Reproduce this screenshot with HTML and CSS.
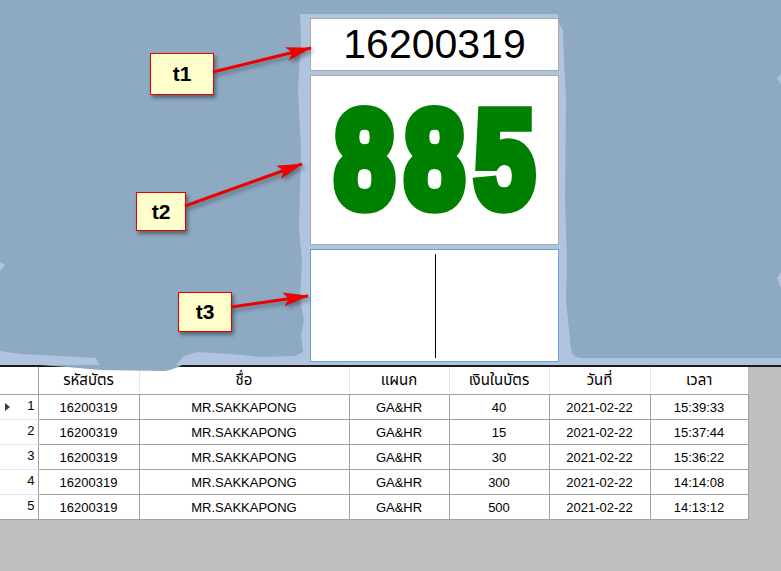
FILE: index.html
```html
<!DOCTYPE html>
<html lang="th">
<head>
<meta charset="utf-8">
<title>Card reader</title>
<link rel="stylesheet" href="styles.css">
</head>
<body>
<div class="top">
  <svg class="backdrop" width="781" height="365" viewBox="0 0 781 365">
    <rect x="0" y="0" width="781" height="365" fill="#8eaac3"/>
    <path fill="#b0c4de" d="M300,14 L558,14 L559,24 L563,30 L564,60 L566,100 L565,200 L567,260 L566,300 L569,330 L571,350 Q573,358 582,358 L781,358 L781,366 L0,366 L0,351 L20,354 L60,356 L96,358 L100,366 L175,366 L184,356 L198,352 L230,354 L262,357 L295,356 L303,352 L301,335 L304,320 L300,300 L302,260 L299,230 L301,150 L298,90 L301,40 Z"/>
    <path fill="#b0c4de" d="M0,262 L5,265 L0,271 Z M781,74 L777,78 L781,84 Z M781,272 L777,278 L781,288 Z"/>
  </svg>
  <div class="panel">
    <div class="box box-t1">16200319</div>
    <div class="box box-t2"><span class="big">885</span></div>
    <div class="box box-t3"><span class="caret"></span></div>
  </div>
  <div class="label label-t1">t1</div>
  <div class="label label-t2">t2</div>
  <div class="label label-t3">t3</div>
  <svg class="arrows" width="781" height="365" viewBox="0 0 781 365">
    <defs>
      <marker id="head" markerUnits="userSpaceOnUse" markerWidth="26" markerHeight="14" viewBox="0 0 26 14" refX="25" refY="7" orient="auto">
        <path d="M0,0 L26,7 L0,14 L6,7 Z" fill="#ee0000"/>
      </marker>
    </defs>
    <line x1="213" y1="72" x2="311" y2="48" stroke="#ee0000" stroke-width="3" marker-end="url(#head)"/>
    <line x1="185" y1="206" x2="302" y2="164" stroke="#ee0000" stroke-width="3" marker-end="url(#head)"/>
    <line x1="231" y1="307" x2="308" y2="296" stroke="#ee0000" stroke-width="3" marker-end="url(#head)"/>
  </svg>
</div>
<div class="rule"></div>
<div class="gridwrap">
  <svg class="bulge" width="200" height="12" viewBox="0 0 200 12">
    <path fill="#8eaac3" d="M40,0 Q70,2 100,5 L165,6 Q175,4 182,0 Z"/>
  </svg>
  <table class="grid">
    <colgroup>
      <col class="c-rh"><col class="c-1"><col class="c-2"><col class="c-3"><col class="c-4"><col class="c-5"><col class="c-6">
    </colgroup>
    <thead>
      <tr>
        <th class="corner"></th>
        <th>รหัสบัตร</th>
        <th>ชื่อ</th>
        <th>แผนก</th>
        <th>เงินในบัตร</th>
        <th>วันที่</th>
        <th>เวลา</th>
      </tr>
    </thead>
    <tbody>
      <tr>
        <td class="rh"><span class="cur"></span><span class="num">1</span></td>
        <td>16200319</td><td>MR.SAKKAPONG</td><td>GA&amp;HR</td><td>40</td><td>2021-02-22</td><td>15:39:33</td>
      </tr>
      <tr>
        <td class="rh"><span></span><span class="num">2</span></td>
        <td>16200319</td><td>MR.SAKKAPONG</td><td>GA&amp;HR</td><td>15</td><td>2021-02-22</td><td>15:37:44</td>
      </tr>
      <tr>
        <td class="rh"><span></span><span class="num">3</span></td>
        <td>16200319</td><td>MR.SAKKAPONG</td><td>GA&amp;HR</td><td>30</td><td>2021-02-22</td><td>15:36:22</td>
      </tr>
      <tr>
        <td class="rh"><span></span><span class="num">4</span></td>
        <td>16200319</td><td>MR.SAKKAPONG</td><td>GA&amp;HR</td><td>300</td><td>2021-02-22</td><td>14:14:08</td>
      </tr>
      <tr>
        <td class="rh"><span></span><span class="num">5</span></td>
        <td>16200319</td><td>MR.SAKKAPONG</td><td>GA&amp;HR</td><td>500</td><td>2021-02-22</td><td>14:13:12</td>
      </tr>
    </tbody>
  </table>
</div>
</body>
</html>
```
FILE: styles.css
```css
html, body {
  margin: 0;
  padding: 0;
}
body {
  width: 781px;
  height: 571px;
  overflow: hidden;
  background: #bfbfbf;
  font-family: "Liberation Sans", Arial, sans-serif;
}
.top {
  position: relative;
  height: 365px;
}
.backdrop, .arrows {
  position: absolute;
  left: 0;
  top: 0;
}
.arrows {
  filter: drop-shadow(2px 3px 2px rgba(0,0,0,0.35));
}
.panel {
  position: relative;
  display: flex;
  flex-direction: column;
  gap: 4px;
  padding: 18px 0 0 310px;
}
.box {
  box-sizing: border-box;
  width: 249px;
  background: #fff;
  border: 1px solid #ababab;
  display: flex;
  align-items: center;
  justify-content: center;
}
.box-t1 {
  height: 53px;
  font-size: 41px;
  color: #000;
  padding-bottom: 1px;
}
.box-t2 {
  height: 170px;
  overflow: hidden;
}
.big {
  display: inline-block;
  font-weight: bold;
  font-size: 108px;
  letter-spacing: 10px;
  margin-right: -10px;
  color: #008000;
  -webkit-text-stroke: 9px #008000;
  transform: scaleY(1.27);
  line-height: 1;
  margin-top: 0;
}
.box-t3 {
  height: 113px;
  border-color: #69a0e0;
}
.caret {
  width: 1px;
  height: 104px;
  background: #000;
  margin-left: 1px;
}
.label {
  position: absolute;
  box-sizing: border-box;
  background: #ffffcc;
  border: 1px solid #ee0000;
  box-shadow: 2px 3px 4px rgba(0,0,0,0.4);
  display: flex;
  align-items: center;
  justify-content: center;
  font-weight: bold;
  font-size: 21px;
  color: #000;
}
.label-t1 { left: 150px; top: 53px; width: 64px; height: 42px; }
.label-t2 { left: 136px; top: 192px; width: 50px; height: 39px; }
.label-t3 { left: 178px; top: 292px; width: 54px; height: 40px; }
.rule {
  height: 2px;
  background: #1c1c1c;
}
.gridwrap {
  position: relative;
}
.bulge {
  position: absolute;
  left: 0;
  top: -2px;
}
.grid {
  border-collapse: collapse;
  table-layout: fixed;
  width: 748px;
  font-size: 13px;
  color: #000;
}
.c-rh { width: 38px; }
.c-1 { width: 101px; }
.c-2 { width: 210px; }
.c-3 { width: 100px; }
.c-4 { width: 100px; }
.c-5 { width: 101px; }
.c-6 { width: 98px; }
.grid th {
  height: 27px;
  padding: 0;
  background: #fff;
  font-weight: normal;
  font-size: 15px;
  font-family: "Liberation Sans", "Noto Sans Thai", Tahoma, "Noto Sans", sans-serif;
  border-left: 1px solid #e3e9f1;
  border-bottom: 1px solid #a0a0a0;
  text-align: center;
  vertical-align: middle;
}
.grid th.corner {
  border-left: none;
  border-right: 1px solid #a0a0a0;
}
.grid td {
  height: 24px;
  padding: 0;
  background: #fff;
  border: 1px solid #a0a0a0;
  text-align: center;
  vertical-align: middle;
  white-space: nowrap;
}
.grid td.rh {
  border-left: none;
  border-top: 1px solid #dfe6ef;
  border-bottom: 1px solid #dfe6ef;
  vertical-align: top;
  position: relative;
}
.grid tbody tr:first-child td.rh {
  border-top: 1px solid #a0a0a0;
}
.grid tbody tr:last-child td.rh {
  border-bottom: 1px solid #a0a0a0;
}
.rh .num {
  position: absolute;
  right: 3px;
  top: 3px;
}
.rh .cur {
  position: absolute;
  left: 5px;
  top: 8px;
  width: 0;
  height: 0;
  border-left: 5px solid #3c3c3c;
  border-top: 4px solid transparent;
  border-bottom: 4px solid transparent;
}
```
